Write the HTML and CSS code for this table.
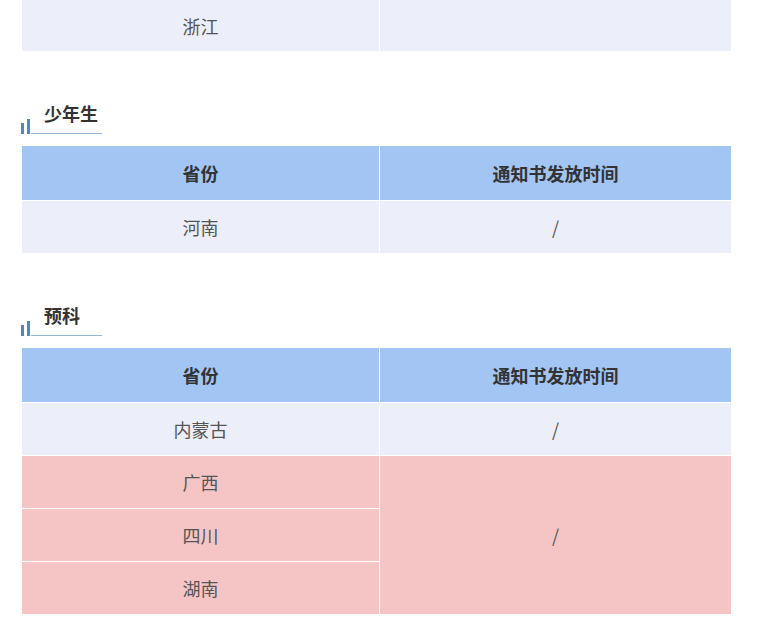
FILE: index.html
```html
<!DOCTYPE html>
<html lang="zh">
<head>
<meta charset="utf-8">
<link rel="stylesheet" href="styles.css">
</head>
<body>
<div class="page">
  <div class="table">
    <div class="cell row-first">浙江</div>
    <div class="cell row-first"></div>
  </div>

  <section class="section">
    <h2 class="heading">
      <span class="bars"><i class="bar bar-short"></i><i class="bar bar-tall"></i></span>
      <span class="title">少年生</span>
    </h2>
    <div class="table">
      <div class="cell head">省份</div>
      <div class="cell head">通知书发放时间</div>
      <div class="cell">河南</div>
      <div class="cell">/</div>
    </div>
  </section>

  <section class="section">
    <h2 class="heading">
      <span class="bars"><i class="bar bar-short"></i><i class="bar bar-tall"></i></span>
      <span class="title">预科</span>
    </h2>
    <div class="table">
      <div class="cell head">省份</div>
      <div class="cell head">通知书发放时间</div>
      <div class="cell">内蒙古</div>
      <div class="cell">/</div>
      <div class="cell pink">广西</div>
      <div class="cell pink span3">/</div>
      <div class="cell pink">四川</div>
      <div class="cell pink">湖南</div>
    </div>
  </section>
</div>
</body>
</html>
```

FILE: styles.css
```css
html, body {
  margin: 0;
  padding: 0;
  background: #ffffff;
}

body {
  font-family: "Noto Sans CJK SC", "Noto Sans", sans-serif;
  color: #555555;
}

.page {
  padding-left: 22px;
  width: 709px;
}

.table {
  display: grid;
  grid-template-columns: 357px 351px;
  grid-auto-rows: auto;
  gap: 1px;
  background: #ffffff;
}

.cell {
  display: flex;
  align-items: center;
  justify-content: center;
  min-height: 52px;
  background: #eceffa;
  font-size: 18px;
  color: #555555;
}

.row-first {
  min-height: 51px;
}

.head {
  min-height: 54px;
  background: #a2c5f3;
  font-weight: 700;
  color: #333333;
}

.pink {
  background: #f5c5c6;
}

.span3 {
  grid-row: span 3;
}

.section {
  margin-top: 50px;
}

.heading {
  display: flex;
  align-items: flex-end;
  margin: 0 0 12px 0;
  font-size: 18px;
  font-weight: 700;
  line-height: 24px;
  color: #333333;
}

.bars {
  display: flex;
  align-items: flex-end;
  gap: 3px;
  margin-left: -1px;
  margin-right: 1px;
}

.bar {
  display: block;
  width: 3px;
  background: #4f88c6;
}

.bar-short {
  height: 11px;
}

.bar-tall {
  height: 15px;
}

.title {
  display: block;
  width: 58px;
  padding: 0 0 8px 13px;
  border-bottom: 1px solid #93b5d6;
}
```
